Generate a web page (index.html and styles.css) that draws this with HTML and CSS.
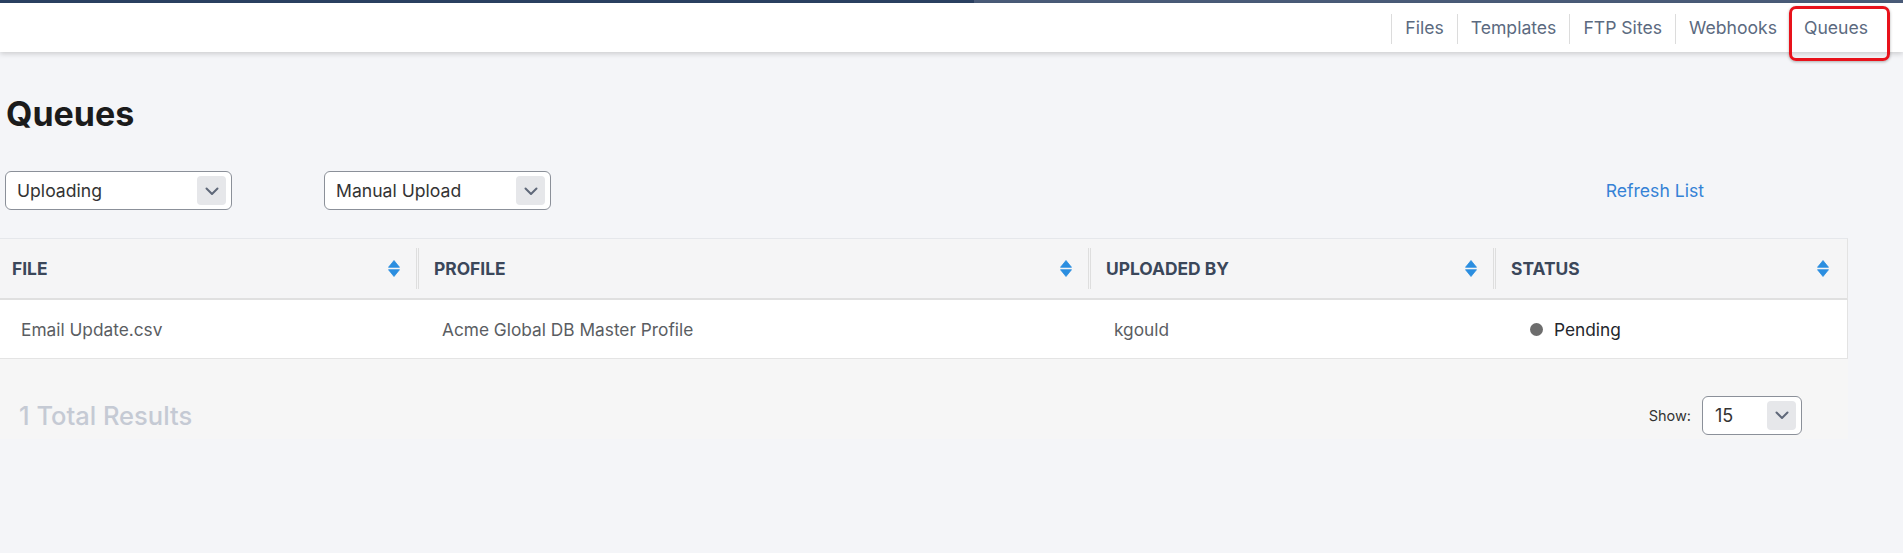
FILE: index.html
```html
<!DOCTYPE html>
<html lang="en">
<head>
  <meta charset="UTF-8">
  <title>Queues</title>
  <link rel="stylesheet" href="styles.css">
</head>
<body>

<div class="topbar"></div>
<header class="appbar">
  <nav class="tabs">
    <a href="#">Files</a>
    <a href="#">Templates</a>
    <a href="#">FTP Sites</a>
    <a href="#">Webhooks</a>
    <a href="#" class="active">Queues</a>
  </nav>
</header>

<main class="page">
  <h1>Queues</h1>

  <div class="filters">
    <div class="select">
      <span>Uploading</span>
      <span class="caret"><svg width="18" height="18" viewBox="0 0 18 18"><polyline points="3.5,6.5 9,12 14.5,6.5" fill="none" stroke="#5f6879" stroke-width="2" stroke-linecap="round" stroke-linejoin="round"/></svg></span>
    </div>
    <div class="select second">
      <span>Manual Upload</span>
      <span class="caret"><svg width="18" height="18" viewBox="0 0 18 18"><polyline points="3.5,6.5 9,12 14.5,6.5" fill="none" stroke="#5f6879" stroke-width="2" stroke-linecap="round" stroke-linejoin="round"/></svg></span>
    </div>
    <a href="#" class="refresh">Refresh List</a>
  </div>
</main>

<div class="results">
  <div class="grid head">
    <div class="th"><span>File</span><svg class="sort" width="12" height="19" viewBox="0 0 12 19"><path d="M0.5 8.3 L6 1.5 L11.5 8.3 Z M0.5 10.7 L6 17.5 L11.5 10.7 Z" fill="#2b8ee0" stroke="#2b8ee0" stroke-width="0.8" stroke-linejoin="round"/></svg></div>
    <div class="th"><span>Profile</span><svg class="sort" width="12" height="19" viewBox="0 0 12 19"><path d="M0.5 8.3 L6 1.5 L11.5 8.3 Z M0.5 10.7 L6 17.5 L11.5 10.7 Z" fill="#2b8ee0" stroke="#2b8ee0" stroke-width="0.8" stroke-linejoin="round"/></svg></div>
    <div class="th"><span>Uploaded By</span><svg class="sort" width="12" height="19" viewBox="0 0 12 19"><path d="M0.5 8.3 L6 1.5 L11.5 8.3 Z M0.5 10.7 L6 17.5 L11.5 10.7 Z" fill="#2b8ee0" stroke="#2b8ee0" stroke-width="0.8" stroke-linejoin="round"/></svg></div>
    <div class="th"><span>Status</span><svg class="sort" width="12" height="19" viewBox="0 0 12 19"><path d="M0.5 8.3 L6 1.5 L11.5 8.3 Z M0.5 10.7 L6 17.5 L11.5 10.7 Z" fill="#2b8ee0" stroke="#2b8ee0" stroke-width="0.8" stroke-linejoin="round"/></svg></div>
  </div>
  <div class="grid row">
    <div class="td first">Email Update.csv</div>
    <div class="td">Acme Global DB Master Profile</div>
    <div class="td">kgould</div>
    <div class="td status"><span class="dot"></span>Pending</div>
  </div>

  <div class="footer">
    <div class="total">1 Total Results</div>
    <div class="show">
      <label>Show:</label>
      <div class="select small">
        <span>15</span>
        <span class="caret"><svg width="18" height="18" viewBox="0 0 18 18"><polyline points="3.5,6.5 9,12 14.5,6.5" fill="none" stroke="#5f6879" stroke-width="2" stroke-linecap="round" stroke-linejoin="round"/></svg></span>
      </div>
    </div>
  </div>
</div>

</body>
</html>
```

FILE: styles.css
```css
body { font-family: Inter, "Noto Sans", sans-serif; background-color: #f4f5f8; margin: 0; color: #222; }

.topbar { height: 3px; background: linear-gradient(to right, #2b4162 51.2%, #4a5c79 51.2%); }
.appbar {
  height: 49px;
  background: white;
  box-shadow: 0 2px 5px rgba(0,0,0,0.16);
  display: flex;
  justify-content: flex-end;
  position: relative;
  z-index: 1;
}
.tabs { display: flex; padding-right: 22px; }
.tabs a {
  display: flex;
  align-items: center;
  padding: 0 13px 0 14px;
  color: #5b6a80;
  text-decoration: none;
  font-size: 17.6px;
  position: relative;
}
.tabs a::before {
  content: "";
  position: absolute;
  left: 0;
  top: 11px;
  bottom: 8px;
  border-left: 1px solid #dcdcdc;
}
.tabs a.active::after {
  content: "";
  position: absolute;
  left: -1px;
  right: -9px;
  top: 3px;
  bottom: -9px;
  border: 3px solid #e8121b;
  border-radius: 7px;
  box-shadow: 0 1px 3px rgba(0,0,0,0.3);
}

.page { padding: 0 5px; }
.page h1 {
  margin: 41px 0 0 1px;
  font-size: 34px;
  line-height: 41px;
  font-weight: 700;
  color: #1b1b1b;
}

.filters {
  display: flex;
  align-items: center;
  margin-top: 37px;
  width: 1843px;
}
.select {
  box-sizing: border-box;
  width: 227px;
  height: 39px;
  border: 1px solid #8b9099;
  border-radius: 6px;
  background: white;
  display: flex;
  align-items: center;
  justify-content: space-between;
  padding: 0 5px 0 11px;
  font-size: 17.6px;
  color: #333;
}
.select.second { margin-left: 92px; }
.caret {
  width: 29px;
  height: 29px;
  border-radius: 4px;
  background: #e6e7ea;
  display: flex;
  align-items: center;
  justify-content: center;
}
.refresh {
  margin-left: auto;
  margin-right: 144px;
  color: #3482d6;
  text-decoration: none;
  font-size: 17.6px;
}

.results { margin-top: 28px; width: 1848px; background: #f6f6f6; padding-bottom: 3px; }
.grid {
  display: grid;
  grid-template-columns: 419px 672px 405px 352px;
  width: 1848px;
  box-sizing: border-box;
  border-right: 1px solid #e3e3e3;
}
.head {
  height: 62px;
  background: #f5f5f6;
  border-top: 1px solid #e5e7eb;
  border-bottom: 2px solid #e0e0e0;
}
.th {
  display: flex;
  align-items: center;
  justify-content: space-between;
  padding: 0 19px 0 12px;
  font-size: 17.4px;
  font-weight: 700;
  text-transform: uppercase;
  color: #3b475a;
  position: relative;
}
.th + .th { padding-left: 15px; }
.th + .th::before {
  content: "";
  position: absolute;
  left: -3px;
  top: 9px;
  bottom: 9px;
  border-left: 3px double #dedede;
}
.row {
  height: 59px;
  background: white;
  border-bottom: 1px solid #e4e4e4;
}
.td {
  display: flex;
  align-items: center;
  padding-left: 23px;
  font-size: 17.3px;
  color: #5a5d62;
}
.td.first { padding-left: 21px; }
.status { color: #23262c; padding-left: 34px; }
.dot {
  width: 13px;
  height: 13px;
  border-radius: 50%;
  background: #6d6d6d;
  margin-right: 11px;
}

.footer {
  display: flex;
  align-items: center;
  justify-content: space-between;
  height: 38px;
  padding-top: 37px;
  padding-bottom: 2px;
}
.total {
  margin-left: 19px;
  font-size: 25.5px;
  font-weight: 500;
  color: #c5cad4;
}
.show {
  display: flex;
  align-items: center;
  margin-right: 46px;
  font-size: 14.5px;
  color: #333;
}
.show label { margin-right: 11px; }
.select.small {
  width: 100px;
  height: 39px;
  font-size: 18px;
  padding-left: 12px;
}
```
